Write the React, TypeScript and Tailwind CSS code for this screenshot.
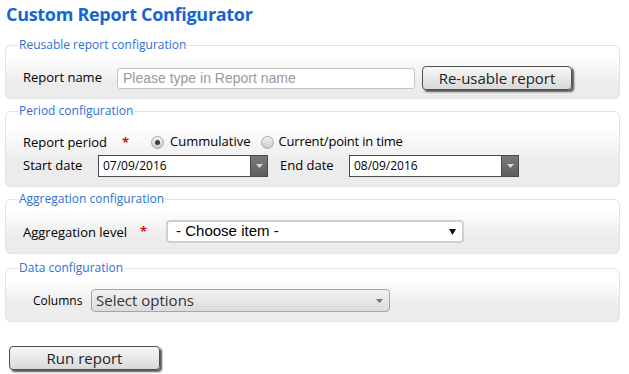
import React from "react";

const sans = { fontFamily: '"Open Sans", "DejaVu Sans", sans-serif' };
const arial = { fontFamily: '"Liberation Sans", Arial, sans-serif' };

const boxCls =
  "w-[615px] rounded-[6px] border border-[#e2e2e2] bg-[linear-gradient(to_bottom,#ffffff_0%,#ffffff_20%,#ececec_70%,#ececec_100%)]";
const legendCls = "ml-[12px] px-[1px] text-[12px] leading-[16px] text-[#2f6fd6]";

const Radio = ({ checked }: { checked?: boolean }) => (
  <span className="flex h-[13px] w-[13px] items-center justify-center rounded-full border border-[#a8a8a8] bg-[linear-gradient(to_bottom,#f4f4f4,#c9c9c9)]">
    {checked && <span className="h-[5px] w-[5px] rounded-full bg-[#3a3a3a]" />}
  </span>
);

const DateInput = ({ value }: { value: string }) => (
  <div className="flex h-[22px] w-[170px] border border-[#4a4a4a] bg-white">
    <div className="flex flex-1 items-center pl-[4px] text-[12px] text-black">{value}</div>
    <div className="flex w-[17px] items-center justify-center border-l border-[#4a4a4a] bg-[linear-gradient(to_bottom,#7a7a7a,#5e5e5e)]">
      <svg width="7" height="4" viewBox="0 0 7 4">
        <path d="M0 0h7L3.5 4z" fill="#d8d8d8" />
      </svg>
    </div>
  </div>
);

const Star = () => <span className="text-[13px] font-bold leading-none text-[#d11]">*</span>;

const Button = ({ label, w }: { label: string; w: string }) => (
  <button
    className={`${w} h-[24px] rounded-[4px] border border-[#505050] bg-[linear-gradient(to_bottom,#f7f7f7,#d9d9d9)] text-[15px] leading-none text-[#222] shadow-[2px_2px_2px_#555]`}
    style={sans}
  >
    {label}
  </button>
);

export default function App() {
  return (
    <div className="h-[374px] w-[629px] bg-white pl-[5px] text-[13px] text-black" style={sans}>
      <h1 className="pl-[1px] text-[18px] font-bold leading-[28px] tracking-[-0.3px] text-[#1766cf]">
        Custom Report Configurator
      </h1>

      <fieldset className={`mt-[9px] pb-[8px] pt-[13px] ${boxCls}`}>
        <legend className={legendCls}>Reusable report configuration</legend>
        <div className="flex h-[24px] items-center pl-[17px]">
          <span className="w-[94px]">Report name</span>
          <input
            className="h-[21px] w-[298px] rounded-[3px] border border-[#c4c4c4] bg-white px-[5px] text-[14px] placeholder:text-[#9a9a9a]"
            style={arial}
            placeholder="Please type in Report name"
          />
          <div className="ml-[7px]">
            <Button label="Re-usable report" w="w-[150px]" />
          </div>
        </div>
      </fieldset>

      <fieldset className={`mt-[4px] pb-[9px] pt-[13px] ${boxCls}`}>
        <legend className={legendCls}>Period configuration</legend>
        <div className="flex h-[20px] items-center pl-[17px]">
          <span className="w-[99px] pt-[2px]">Report period</span>
          <Star />
          <span className="ml-[22px]">
            <Radio checked />
          </span>
          <span className="ml-[6px]">Cummulative</span>
          <span className="ml-[10px]">
            <Radio />
          </span>
          <span className="ml-[5px] tracking-[-0.2px]">Current/point in time</span>
        </div>
        <div className="mt-[3px] flex items-center pl-[17px]">
          <span className="w-[75px]">Start date</span>
          <DateInput value="07/09/2016" />
          <span className="ml-[12px] w-[69px]">End date</span>
          <DateInput value="08/09/2016" />
        </div>
      </fieldset>

      <fieldset className={`mt-[4px] pb-[10px] pt-[13px] ${boxCls}`}>
        <legend className={legendCls}>Aggregation configuration</legend>
        <div className="flex items-center pl-[17px]">
          <span className="w-[117px] pt-[2px]">Aggregation level</span>
          <Star />
          <div
            className="ml-[19px] flex h-[23px] w-[298px] items-center justify-between rounded-[4px] border-2 border-[#cfcfcf] bg-white pl-[8px] pr-[6px] text-[15px]"
            style={arial}
          >
            <span>- Choose item -</span>
            <svg width="7" height="6" viewBox="0 0 7 6">
              <path d="M0 0h7L3.5 6z" fill="#111" />
            </svg>
          </div>
        </div>
      </fieldset>

      <fieldset className={`mt-[6px] pb-[9px] pt-[13px] ${boxCls}`}>
        <legend className={legendCls}>Data configuration</legend>
        <div className="flex items-center pl-[27px]">
          <span className="w-[58px] text-[12px]">Columns</span>
          <div className="flex h-[23px] w-[299px] items-center justify-between rounded-[4px] border border-[#a5a5a5] bg-[linear-gradient(to_bottom,#f2f2f2,#dcdcdc)] pl-[4px] pr-[6px] text-[15px] text-[#333]">
            <span>Select options</span>
            <svg width="7" height="4" viewBox="0 0 7 4">
              <path d="M0 0h7L3.5 4z" fill="#777" />
            </svg>
          </div>
        </div>
      </fieldset>

      <div className="ml-[4px] mt-[24px]">
        <Button label="Run report" w="w-[151px]" />
      </div>
    </div>
  );
}
